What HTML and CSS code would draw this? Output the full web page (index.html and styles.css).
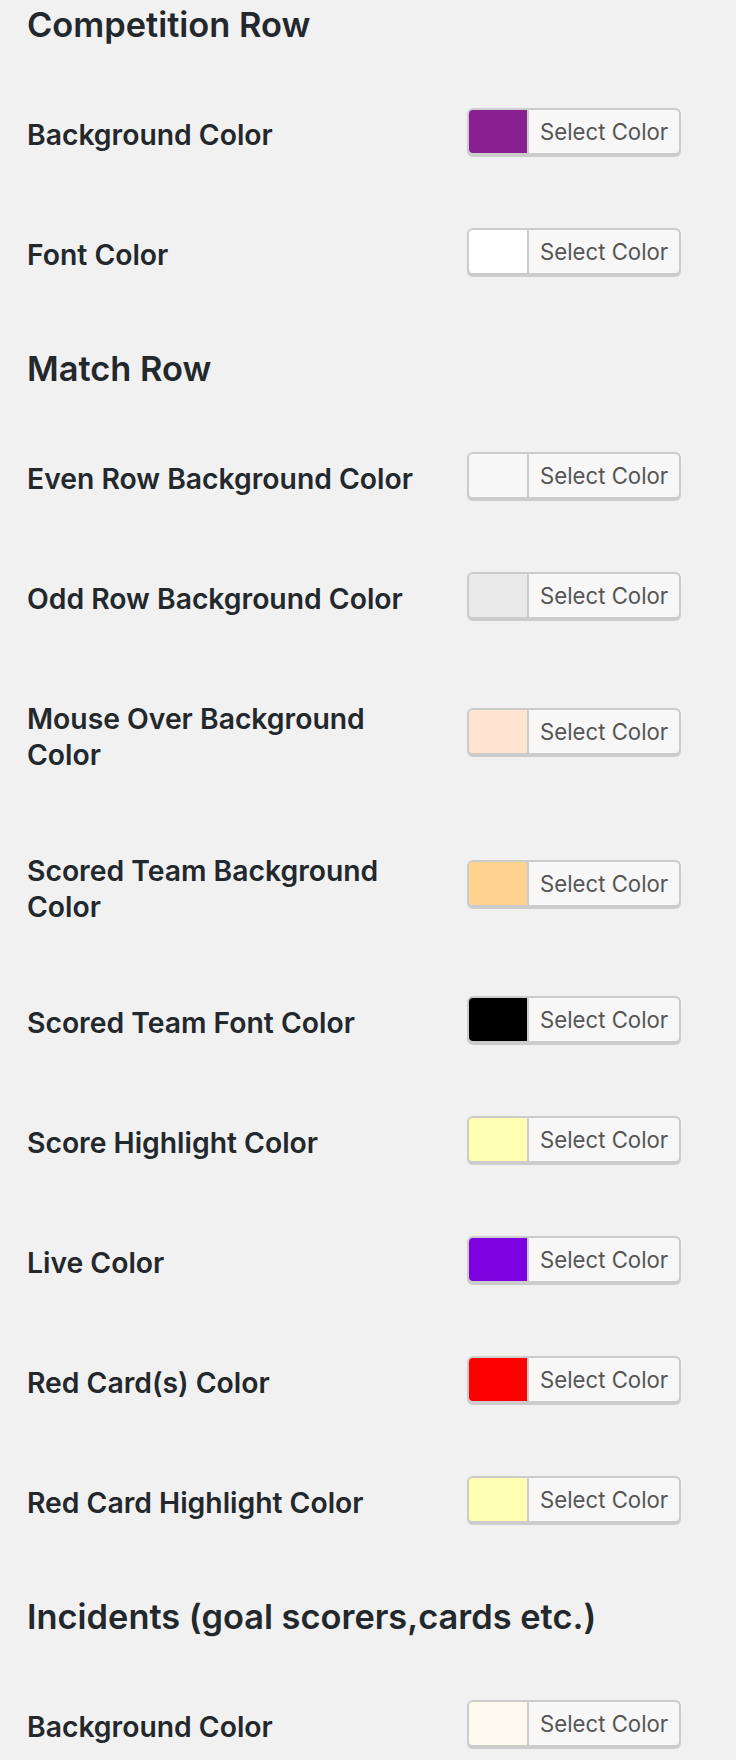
FILE: index.html
```html
<!DOCTYPE html>
<html>
<head>
<meta charset="utf-8">
<link rel="stylesheet" href="styles.css">
</head>
<body>
<div class="wrap">
  <h2 class="section-title first">Competition Row</h2>
  <div class="form-table">
    <div class="row">
      <div class="label">Background Color</div>
      <div class="field"><div class="color-btn"><span class="swatch" style="background:#88208f"></span><span class="btn-text">Select Color</span></div></div>
    </div>
    <div class="row">
      <div class="label">Font Color</div>
      <div class="field"><div class="color-btn"><span class="swatch" style="background:#ffffff"></span><span class="btn-text">Select Color</span></div></div>
    </div>
  </div>

  <h2 class="section-title">Match Row</h2>
  <div class="form-table">
    <div class="row">
      <div class="label">Even Row Background Color</div>
      <div class="field"><div class="color-btn"><span class="swatch" style="background:#f7f7f7"></span><span class="btn-text">Select Color</span></div></div>
    </div>
    <div class="row">
      <div class="label">Odd Row Background Color</div>
      <div class="field"><div class="color-btn"><span class="swatch" style="background:#e9e9e9"></span><span class="btn-text">Select Color</span></div></div>
    </div>
    <div class="row">
      <div class="label">Mouse Over Background Color</div>
      <div class="field"><div class="color-btn"><span class="swatch" style="background:#ffe5d1"></span><span class="btn-text">Select Color</span></div></div>
    </div>
    <div class="row">
      <div class="label">Scored Team Background Color</div>
      <div class="field"><div class="color-btn"><span class="swatch" style="background:#ffd38f"></span><span class="btn-text">Select Color</span></div></div>
    </div>
    <div class="row">
      <div class="label">Scored Team Font Color</div>
      <div class="field"><div class="color-btn"><span class="swatch" style="background:#000000"></span><span class="btn-text">Select Color</span></div></div>
    </div>
    <div class="row">
      <div class="label">Score Highlight Color</div>
      <div class="field"><div class="color-btn"><span class="swatch" style="background:#ffffb3"></span><span class="btn-text">Select Color</span></div></div>
    </div>
    <div class="row">
      <div class="label">Live Color</div>
      <div class="field"><div class="color-btn"><span class="swatch" style="background:#7c02e0"></span><span class="btn-text">Select Color</span></div></div>
    </div>
    <div class="row">
      <div class="label">Red Card(s) Color</div>
      <div class="field"><div class="color-btn"><span class="swatch" style="background:#ff0000"></span><span class="btn-text">Select Color</span></div></div>
    </div>
    <div class="row">
      <div class="label">Red Card Highlight Color</div>
      <div class="field"><div class="color-btn"><span class="swatch" style="background:#ffffb3"></span><span class="btn-text">Select Color</span></div></div>
    </div>
  </div>

  <h2 class="section-title">Incidents (goal scorers,cards etc.)</h2>
  <div class="form-table">
    <div class="row">
      <div class="label">Background Color</div>
      <div class="field"><div class="color-btn"><span class="swatch" style="background:#fdf9ef"></span><span class="btn-text">Select Color</span></div></div>
    </div>
  </div>
</div>
</body>
</html>
```
FILE: styles.css
```css
html, body {
  margin: 0;
  padding: 0;
  background: #f1f1f1;
}
body {
  font-family: Inter, "Noto Sans", "Liberation Sans", sans-serif;
  color: #23282d;
}
.wrap {
  padding: 7px 0 0 27px;
}
.section-title {
  font-size: 34.4px;
  font-weight: 600;
  line-height: 36px;
  margin: 34px 0;
}
.section-title.first {
  margin-top: 0;
}
.form-table {
  margin: 0;
}
.row {
  display: flex;
  align-items: stretch;
}
.label {
  width: 400px;
  flex: none;
  box-sizing: content-box;
  padding: 40px 20px 40px 0;
  font-size: 28.3px;
  font-weight: 600;
  line-height: 36px;
}
.field {
  display: flex;
  align-items: center;
  padding: 30px 20px;
}
.color-btn {
  display: flex;
  box-sizing: border-box;
  height: 47px;
  margin: 1px 0 12px;
  border: 2px solid #ccc;
  border-radius: 6px;
  box-shadow: 0 2px 0 #ccc;
  background: #f7f7f7;
  overflow: hidden;
}
.swatch {
  width: 58px;
  flex: none;
}
.btn-text {
  border-left: 2px solid #ccc;
  padding: 0 11px;
  font-size: 22.2px;
  line-height: 43px;
  color: #555;
  font-weight: 400;
  white-space: nowrap;
}
```
